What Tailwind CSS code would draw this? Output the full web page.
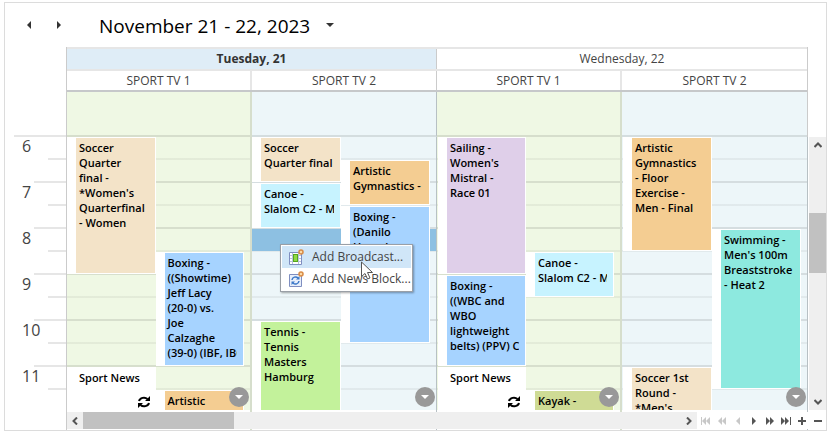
<!DOCTYPE html>
<html lang="en">
<head>
    <meta charset="UTF-8">
    <title>Broadcast Schedule</title>
    <meta name="viewport" content="width=device-width, initial-scale=1.0">
    <script src="https://cdn.jsdelivr.net/npm/@tailwindcss/browser@4"></script>
</head>
<body class="bg-white font-['Open_Sans',sans-serif] text-xs text-[#444]">
<div class="h-screen pt-[2px] pr-[2px] pb-[5px] pl-[4px]">
    <main class="relative flex h-full flex-col border border-[#dcdcdc]">

        <!-- date navigation -->
        <header class="flex h-11 shrink-0 items-center pl-5">
            <button type="button" aria-label="Previous days" class="flex h-5 w-2"><svg class="m-auto h-2 w-1 fill-[#333]" viewBox="0 0 4 8"><path d="M4 0v8L0 4z"/></svg></button>
            <button type="button" aria-label="Next days" class="ml-[22px] flex h-5 w-2"><svg class="m-auto h-2 w-1 fill-[#333]" viewBox="0 0 4 8"><path d="M0 0v8l4-4z"/></svg></button>
            <h1 class="ml-9 pt-[2px] text-[19px] leading-6 text-black">November 21 - 22, 2023</h1>
            <button type="button" aria-label="Choose date" class="ml-3 flex h-5 w-4"><svg class="m-auto h-1 w-2 fill-[#333]" viewBox="0 0 8 4"><path d="M0 0h8L4 4z"/></svg></button>
        </header>

        <!-- day and channel headings -->
        <div class="flex shrink-0">
            <div class="flex w-[61px] items-end pl-[9px]"><div class="h-[2px] flex-1 bg-[#e6e6e6]"></div></div>
            <div class="flex-1 border-x border-[#cbcbcb]">
                <div class="grid grid-cols-2 border-y-2 border-[#e6e6e6] text-center leading-5">
                    <h2 class="border-r border-[#cbcbcb] bg-[#dfedf7] font-bold text-[#333]">Tuesday, 21</h2>
                    <h2>Wednesday, 22</h2>
                </div>
                <div class="grid grid-cols-4 border-b-2 border-[#c6c8ca] text-center leading-[19px]">
                    <h3 class="border-r-2 border-[#e6e6e6]">SPORT TV 1</h3>
                    <h3 class="border-r border-[#cbcbcb]">SPORT TV 2</h3>
                    <h3 class="border-r-2 border-[#e6e6e6]">SPORT TV 1</h3>
                    <h3>SPORT TV 2</h3>
                </div>
                <div class="grid h-[45px] grid-cols-4">
                    <div class="border-r-2 border-b-2 border-black/10 bg-[#eff8e4]"></div>
                    <div class="border-r border-b-2 border-r-[#b7c0c4] border-b-black/10 bg-[#edf6f9]"></div>
                    <div class="border-r-2 border-b-2 border-black/10 bg-[#eff8e4]"></div>
                    <div class="border-b-2 border-black/10 bg-[#edf6f9]"></div>
                </div>
            </div>
            <div class="w-[18px]"></div>
        </div>

        <!-- time grid, one 23px row per half hour -->
        <div class="flex min-h-0 flex-1">
            <div class="w-[61px] overflow-hidden text-base leading-[18px]">
                <div class="flex h-[46px] flex-col items-end"><span class="h-[21px] w-11">6</span><i class="h-[2px] w-[18px] bg-[#e6e6e6]"></i><i class="mt-[21px] h-[2px] w-8 bg-[#e6e6e6]"></i></div>
                <div class="flex h-[46px] flex-col items-end"><span class="h-[21px] w-11">7</span><i class="h-[2px] w-[18px] bg-[#e6e6e6]"></i><i class="mt-[21px] h-[2px] w-8 bg-[#e6e6e6]"></i></div>
                <div class="flex h-[46px] flex-col items-end"><span class="h-[21px] w-11">8</span><i class="h-[2px] w-[18px] bg-[#e6e6e6]"></i><i class="mt-[21px] h-[2px] w-8 bg-[#e6e6e6]"></i></div>
                <div class="flex h-[46px] flex-col items-end"><span class="h-[21px] w-11">9</span><i class="h-[2px] w-[18px] bg-[#e6e6e6]"></i><i class="mt-[21px] h-[2px] w-8 bg-[#e6e6e6]"></i></div>
                <div class="flex h-[46px] flex-col items-end"><span class="h-[21px] w-11">10</span><i class="h-[2px] w-[18px] bg-[#e6e6e6]"></i><i class="mt-[21px] h-[2px] w-8 bg-[#e6e6e6]"></i></div>
                <div class="flex h-[46px] flex-col items-end"><span class="h-[21px] w-11">11</span><i class="h-[2px] w-[18px] bg-[#e6e6e6]"></i></div>
            </div>
            <div class="grid flex-1 grid-cols-4 overflow-hidden border-x border-l-[#cbcbcb] border-r-[#b7c0c4] text-[11px] leading-[15px] font-semibold text-black">

                <section class="relative min-h-0 overflow-hidden border-r-2 border-black/10 bg-[#eff8e4]">
                    <div class="grid auto-rows-[23px] grid-cols-2 bg-[repeating-linear-gradient(to_bottom,transparent_0_21px,rgb(0_0_0/0.05)_21px_23px,transparent_23px_44px,rgb(0_0_0/0.1)_44px_46px)] pr-[6px] whitespace-nowrap">
                        <article class="col-start-1 row-start-1 row-span-6 mb-px bg-white pt-px pr-px pb-px pl-[9px]"><p class="h-full overflow-hidden border-r-6 border-[#f3e3c8] bg-[#f3e3c8] pt-[2px] pl-[3px]">Soccer<br>Quarter<br>final -<br>*Women's<br>Quarterfinal<br>- Women</p></article>
                        <article class="col-start-2 row-start-6 row-span-5 mb-px bg-white pt-px pr-px pb-px pl-[9px]"><p class="h-full overflow-hidden border-r-6 border-[#a6d3ff] bg-[#a6d3ff] pt-[2px] pl-[3px]">Boxing -<br>((Showtime)<br>Jeff Lacy<br>(20-0) vs.<br>Joe<br>Calzaghe<br>(39-0) (IBF, IBO)</p></article>
                        <article class="relative col-start-1 row-start-11 row-span-2 bg-white pt-[3px] pl-3">Sport News
                            <svg class="absolute top-[29px] right-[6px] h-3 w-3" viewBox="0 0 12 12" fill="none" stroke="#000" stroke-width="2"><path d="M1 5a5 4.200 0 0 1 8.500-2M11 7a5 4.200 0 0 1-8.500 2"/><path d="M12 0v5H7zM0 12V7h5z" fill="#000" stroke="none"/></svg>
                        </article>
                        <article class="col-start-2 row-start-12 bg-white pt-px pr-px pl-[9px]"><p class="h-full overflow-hidden border-r-6 border-[#f4cd92] bg-[#f4cd92] pt-[2px] pl-[3px]">Artistic</p></article>
                    </div>
                    <button type="button" aria-label="More broadcasts" class="absolute right-px bottom-[23px] flex h-5 w-5 rounded-full bg-[#999]"><svg class="m-auto h-1 w-2 fill-white" viewBox="0 0 8 4"><path d="M0 0h8L4 4z"/></svg></button>
                    <div class="absolute inset-x-0 bottom-0 h-5 bg-white"></div>
                </section>

                <section class="relative min-h-0 overflow-hidden border-r border-[#b7c0c4] bg-[#edf6f9]">
                    <div class="grid auto-rows-[23px] grid-cols-2 bg-[repeating-linear-gradient(to_bottom,transparent_0_21px,rgb(0_0_0/0.05)_21px_23px,transparent_23px_44px,rgb(0_0_0/0.1)_44px_46px)] pr-[6px] whitespace-nowrap">
                        <div class="col-span-2 col-start-1 row-start-5 mr-[-6px] mb-px bg-[#8dc0e2]"></div>
                        <article class="col-start-1 row-start-1 row-span-2 mb-px bg-white pt-px pr-px pb-px pl-[9px]"><p class="h-full overflow-hidden border-r-6 border-[#f3e3c8] bg-[#f3e3c8] pt-[2px] pl-[3px]">Soccer<br>Quarter final</p></article>
                        <article class="col-start-1 row-start-3 row-span-2 mb-px bg-white pt-px pr-px pb-px pl-[9px]"><p class="h-full overflow-hidden border-r-6 border-[#c7f3ff] bg-[#c7f3ff] pt-[2px] pl-[3px]">Canoe -<br>Slalom C2 - Men</p></article>
                        <article class="col-start-2 row-start-2 row-span-2 mb-px bg-white pt-px pr-px pb-px pl-[9px]"><p class="h-full overflow-hidden border-r-6 border-[#f4cd92] bg-[#f4cd92] pt-[2px] pl-[3px]">Artistic<br>Gymnastics -</p></article>
                        <article class="col-start-2 row-start-4 row-span-6 mb-px bg-white pt-px pr-px pb-px pl-[9px]"><p class="h-full overflow-hidden border-r-6 border-[#a6d3ff] bg-[#a6d3ff] pt-[2px] pl-[3px]">Boxing -<br>(Danilo<br>Haussler</p></article>
                        <article class="col-start-1 row-start-9 row-span-4 bg-white pt-px pr-px pl-[9px]"><p class="h-full overflow-hidden border-r-6 border-[#c3f29b] bg-[#c3f29b] pt-[2px] pl-[3px]">Tennis -<br>Tennis<br>Masters<br>Hamburg</p></article>
                    </div>
                    <button type="button" aria-label="More broadcasts" class="absolute right-px bottom-[23px] flex h-5 w-5 rounded-full bg-[#999]"><svg class="m-auto h-1 w-2 fill-white" viewBox="0 0 8 4"><path d="M0 0h8L4 4z"/></svg></button>
                    <div class="absolute inset-x-0 bottom-0 h-5 bg-white"></div>
                </section>

                <section class="relative min-h-0 overflow-hidden border-r-2 border-black/10 bg-[#eff8e4]">
                    <div class="grid auto-rows-[23px] grid-cols-2 bg-[repeating-linear-gradient(to_bottom,transparent_0_21px,rgb(0_0_0/0.05)_21px_23px,transparent_23px_44px,rgb(0_0_0/0.1)_44px_46px)] pr-[6px] pl-px whitespace-nowrap">
                        <article class="col-start-1 row-start-1 row-span-6 mb-px bg-white pt-px pr-px pb-px pl-[9px]"><p class="h-full overflow-hidden border-r-6 border-[#dfcfe9] bg-[#dfcfe9] pt-[2px] pl-[3px]">Sailing -<br>Women's<br>Mistral -<br>Race 01</p></article>
                        <article class="col-start-1 row-start-7 row-span-4 mb-px bg-white pt-px pr-px pb-px pl-[9px]"><p class="h-full overflow-hidden border-r-6 border-[#a6d3ff] bg-[#a6d3ff] pt-[2px] pl-[3px]">Boxing -<br>((WBC and<br>WBO<br>lightweight<br>belts) (PPV) Cotto</p></article>
                        <article class="col-start-2 row-start-6 row-span-2 mb-px bg-white pt-px pr-px pb-px pl-[9px]"><p class="h-full overflow-hidden border-r-6 border-[#c7f3ff] bg-[#c7f3ff] pt-[2px] pl-[3px]">Canoe -<br>Slalom C2 - Men</p></article>
                        <article class="relative col-start-1 row-start-11 row-span-2 bg-white pt-[3px] pl-3">Sport News
                            <svg class="absolute top-[29px] right-[6px] h-3 w-3" viewBox="0 0 12 12" fill="none" stroke="#000" stroke-width="2"><path d="M1 5a5 4.200 0 0 1 8.500-2M11 7a5 4.200 0 0 1-8.500 2"/><path d="M12 0v5H7zM0 12V7h5z" fill="#000" stroke="none"/></svg>
                        </article>
                        <article class="col-start-2 row-start-12 bg-white pt-px pr-px pl-[9px]"><p class="h-full overflow-hidden border-r-6 border-[#cfdb95] bg-[#cfdb95] pt-[2px] pl-[3px]">Kayak -</p></article>
                    </div>
                    <button type="button" aria-label="More broadcasts" class="absolute right-px bottom-[23px] flex h-5 w-5 rounded-full bg-[#999]"><svg class="m-auto h-1 w-2 fill-white" viewBox="0 0 8 4"><path d="M0 0h8L4 4z"/></svg></button>
                    <div class="absolute inset-x-0 bottom-0 h-5 bg-white"></div>
                </section>

                <section class="relative min-h-0 overflow-hidden bg-[#edf6f9]">
                    <div class="grid auto-rows-[23px] grid-cols-2 bg-[repeating-linear-gradient(to_bottom,transparent_0_21px,rgb(0_0_0/0.05)_21px_23px,transparent_23px_44px,rgb(0_0_0/0.1)_44px_46px)] pr-[6px] pl-px whitespace-nowrap">
                        <article class="col-start-1 row-start-1 row-span-5 mb-px bg-white pt-px pr-px pb-px pl-[9px]"><p class="h-full overflow-hidden border-r-6 border-[#f4cd92] bg-[#f4cd92] pt-[2px] pl-[3px]">Artistic<br>Gymnastics<br>- Floor<br>Exercise -<br>Men - Final</p></article>
                        <article class="col-start-2 row-start-5 row-span-7 mb-px bg-white pt-px pr-px pb-px pl-[9px]"><p class="h-full overflow-hidden border-r-6 border-[#8de9df] bg-[#8de9df] pt-[2px] pl-[3px]">Swimming -<br>Men's 100m<br>Breaststroke<br>- Heat 2</p></article>
                        <article class="col-start-1 row-start-11 row-span-2 bg-white pt-px pr-px pl-[9px]"><p class="h-full overflow-hidden border-r-6 border-[#f3e3c8] bg-[#f3e3c8] pt-[2px] pl-[3px]">Soccer 1st<br>Round -<br>*Men's</p></article>
                    </div>
                    <button type="button" aria-label="More broadcasts" class="absolute right-px bottom-[23px] flex h-5 w-5 rounded-full bg-[#999]"><svg class="m-auto h-1 w-2 fill-white" viewBox="0 0 8 4"><path d="M0 0h8L4 4z"/></svg></button>
                    <div class="absolute inset-x-0 bottom-0 h-5 bg-white"></div>
                </section>
            </div>

            <!-- vertical scrollbar -->
            <div class="w-[18px] pb-5 pl-px">
                <div class="flex h-full flex-col bg-[#efefef]">
                    <button type="button" aria-label="Scroll up" class="flex h-4"><svg class="m-auto h-[6px] w-2" viewBox="0 0 8 6" fill="none" stroke="#555" stroke-width="2"><path d="M.5 5L4 1.500 7.500 5"/></svg></button>
                    <div class="mt-[60px] h-[60px] bg-[#c1c1c1]"></div>
                    <button type="button" aria-label="Scroll down" class="mt-auto flex h-4"><svg class="m-auto h-[6px] w-2" viewBox="0 0 8 6" fill="none" stroke="#555" stroke-width="2"><path d="M.5 1L4 4.500 7.500 1"/></svg></button>
                </div>
            </div>
        </div>

        <!-- horizontal scrollbar and record navigator -->
        <footer class="absolute right-0 bottom-px left-[62px] flex h-[17px]">
            <div class="flex flex-1 bg-[#efefef]">
                <button type="button" aria-label="Scroll left" class="flex w-4"><svg class="m-auto h-2 w-[6px]" viewBox="0 0 6 8" fill="none" stroke="#555" stroke-width="2"><path d="M5 .5L1.500 4 5 7.500"/></svg></button>
                <div class="w-[24%] bg-[#c1c1c1]"></div>
                <button type="button" aria-label="Scroll right" class="ml-auto flex w-4"><svg class="m-auto h-2 w-[6px]" viewBox="0 0 6 8" fill="none" stroke="#555" stroke-width="2"><path d="M1 .5L4.500 4 1 7.500"/></svg></button>
            </div>
            <nav class="flex bg-white fill-[#555] pt-px pl-px">
                <button type="button" disabled aria-label="First" class="flex w-4 fill-[#c8c8c8]"><svg class="m-auto h-2 w-[10px]" viewBox="0 0 10 8"><path d="M0 0h1v8H0zM5 0v8L1 4zM9 0v8L5 4z"/></svg></button>
                <button type="button" disabled aria-label="Previous page" class="flex w-4 fill-[#c8c8c8]"><svg class="m-auto h-2 w-2" viewBox="0 0 8 8"><path d="M4 0v8L0 4zM8 0v8L4 4z"/></svg></button>
                <button type="button" disabled aria-label="Previous" class="flex w-4 fill-[#c8c8c8]"><svg class="m-auto h-2 w-1" viewBox="0 0 4 8"><path d="M4 0v8L0 4z"/></svg></button>
                <button type="button" aria-label="Next" class="flex w-4"><svg class="m-auto h-2 w-1" viewBox="0 0 4 8"><path d="M0 0v8l4-4z"/></svg></button>
                <button type="button" aria-label="Next page" class="flex w-4"><svg class="m-auto h-2 w-2" viewBox="0 0 8 8"><path d="M0 0v8l4-4zM4 0v8l4-4z"/></svg></button>
                <button type="button" aria-label="Last" class="flex w-4"><svg class="m-auto h-2 w-[10px]" viewBox="0 0 10 8"><path d="M0 0v8l4-4zM4 0v8l4-4zM9 0h1v8H9z"/></svg></button>
                <button type="button" aria-label="Zoom in" class="flex w-4"><svg class="m-auto h-2 w-2" viewBox="0 0 8 8"><path d="M3 0h2v3h3v2H5v3H3V5H0V3h3z"/></svg></button>
                <button type="button" aria-label="Zoom out" class="flex w-4"><svg class="m-auto h-2 w-2" viewBox="0 0 8 8"><path d="M0 3h8v2H0z"/></svg></button>
            </nav>
        </footer>

        <!-- context menu -->
        <div role="menu" class="absolute top-[241px] left-[275px] border border-[#9a9fa6] bg-white p-px text-xs shadow-[1px_1px_2px_rgb(0_0_0/0.35)]">
            <button type="button" role="menuitem" class="flex h-[22px] w-full items-center gap-2 bg-[#d0e6f8] pl-[6px]">
                <svg class="h-4 w-4" viewBox="0 0 16 16"><path d="M1.500 3.500h12v12h-12z" fill="#fff" stroke="#7f8ec0"/><path d="M2 6.500h11M2 9.500h11M2 12.500h11M4.500 4v11M10.500 4v11" stroke="#b9c3dd"/><path d="M5 5h5v8H5z" fill="#55a51c"/><path d="M6 6h3v6H6z" fill="#8fd943"/><circle cx="13" cy="3" r="2" fill="#fbd9a8" stroke="#d98b45" stroke-width="1.500"/></svg>
                Add Broadcast...
            </button>
            <button type="button" role="menuitem" class="flex h-[22px] w-full items-center gap-2 pl-[6px]">
                <svg class="h-4 w-4" viewBox="0 0 16 16"><path d="M1.500 3.500h12v12h-12z" fill="#e8effb" stroke="#7f8ec0"/><path d="M4 9a3.500 3.500 0 0 1 6-2M11 10a3.500 3.500 0 0 1-6 2" fill="none" stroke="#3c78c8" stroke-width="1.500"/><path d="M11.500 5v3.500H8zM3.500 14v-3.500H7z" fill="#3c78c8"/><circle cx="13" cy="3" r="2" fill="#fbd9a8" stroke="#d98b45" stroke-width="1.500"/></svg>
                Add News Block...
            </button>
        </div>
        <svg class="pointer-events-none absolute top-[258px] left-[356px] h-[19px] w-[13px]" viewBox="0 0 13 19"><path d="M.5 1v14.500L4 12.500l2.500 5.500 2.500-1-2.500-5.500h5z" fill="#fff" stroke="#555"/></svg>
    </main>
</div>
</body>
</html>
